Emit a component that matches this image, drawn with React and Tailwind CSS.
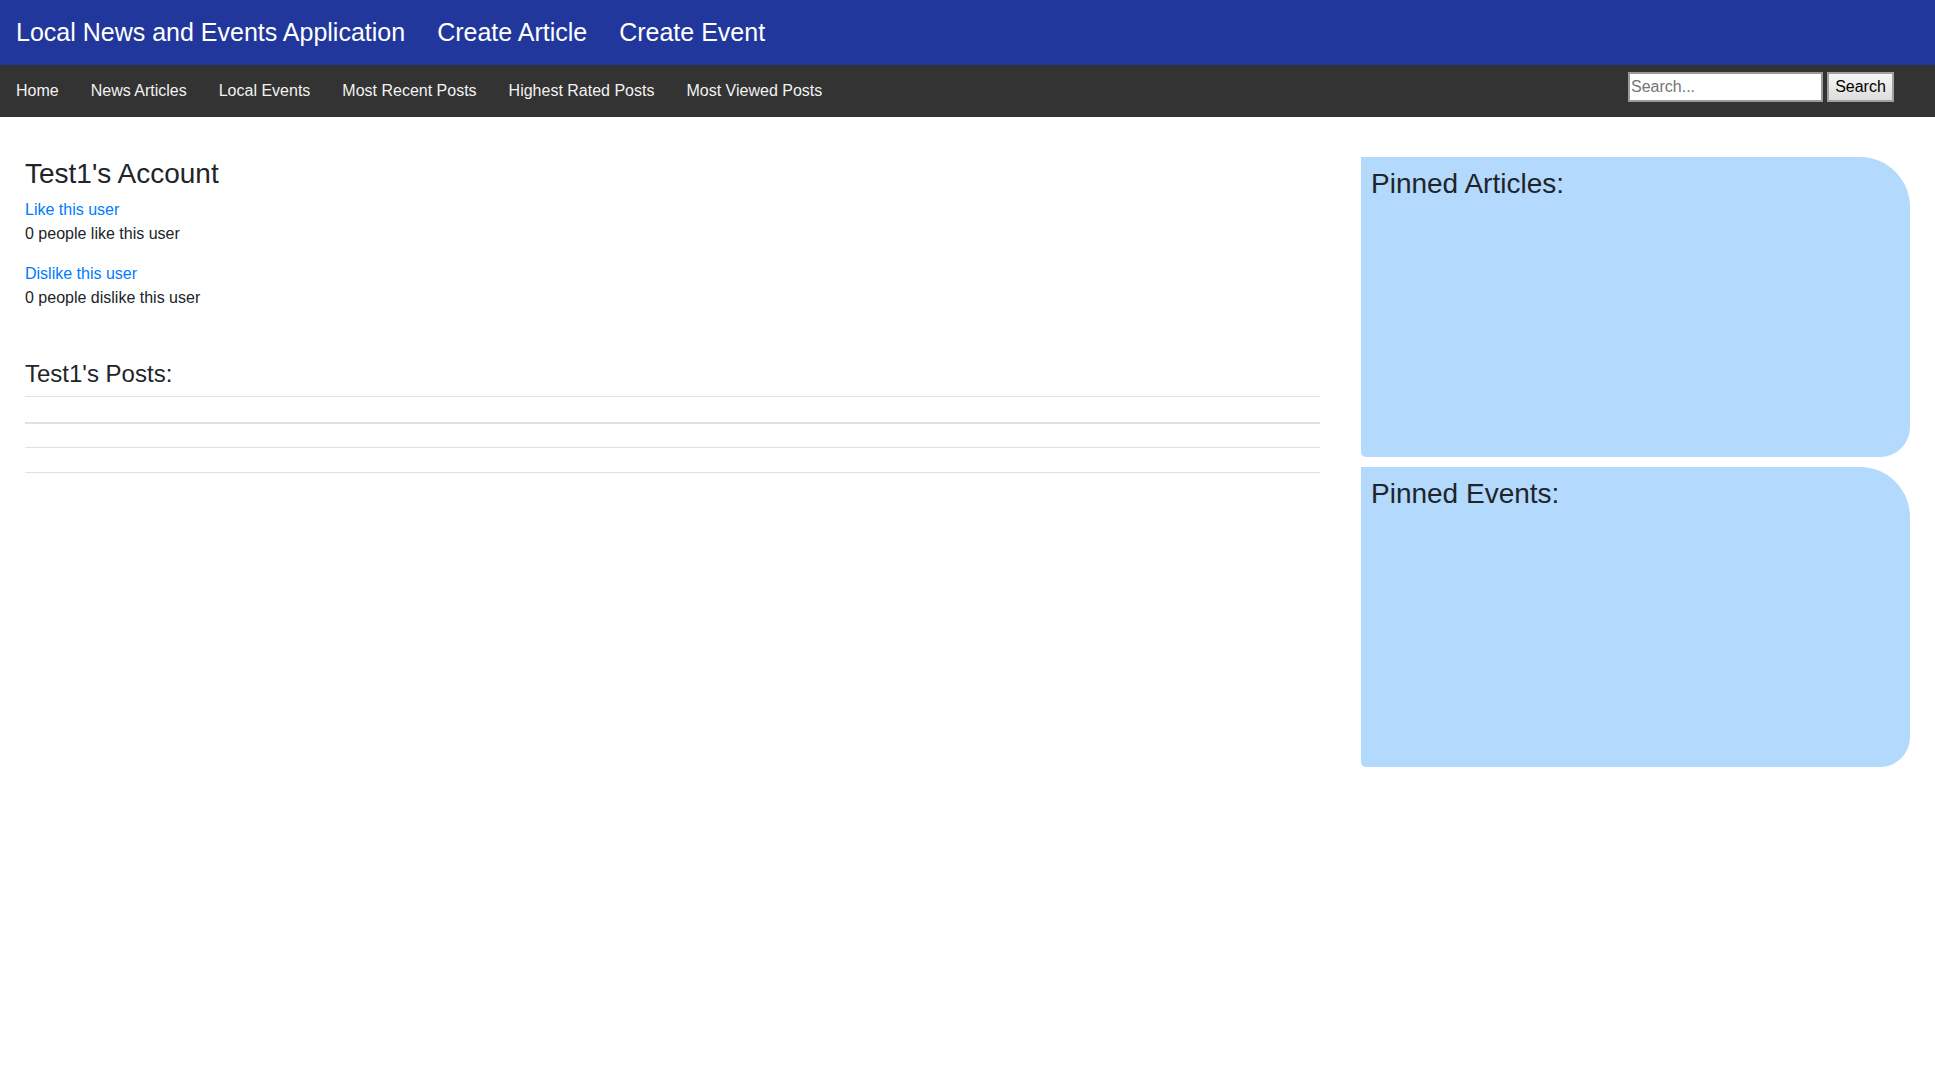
export default function App() {
  const font = { fontFamily: '"Liberation Sans", Arial, sans-serif' };
  return (
    <div className="min-h-screen bg-white text-[#212529]" style={font}>
      <header className="h-[65px] bg-[#21379c] flex items-center pb-[2px]">
        <a className="px-4 text-[25px] text-white leading-[1.2]">Local News and Events Application</a>
        <a className="px-4 text-[25px] text-white leading-[1.2]">Create Article</a>
        <a className="px-4 text-[25px] text-white leading-[1.2]">Create Event</a>
      </header>
      <nav className="h-[52px] bg-[#333333] flex items-center">
        {["Home", "News Articles", "Local Events", "Most Recent Posts", "Highest Rated Posts", "Most Viewed Posts"].map((t) => (
          <a key={t} className="px-4 text-[16px] text-[#f2f2f2] leading-[24px]">{t}</a>
        ))}
        <div className="ml-auto mr-[41px] self-start mt-[7px] flex items-center gap-[4px]">
          <input
            type="text"
            placeholder="Search..."
            className="w-[195px] h-[30px] bg-white border-2 border-[#9a9a9a] px-[1px] text-[16px] text-black placeholder:text-[#757575] outline-none"
            style={font}
          />
          <button
            className="w-[67px] h-[30px] border-2 border-[#a0a0a0] bg-gradient-to-b from-[#f6f6f6] to-[#dddddd] text-[16px] text-black"
            style={font}
          >
            Search
          </button>
        </div>
      </nav>
      <main className="flex px-[25px] pt-[40px] gap-[41px]">
        <section className="flex-1 flex flex-col">
          <h3 className="text-[28px] leading-[1.2] mb-[7px]">Test1's Account</h3>
          <div className="text-[16px] leading-[24px]">
            <a className="text-[#007bff] block">Like this user</a>
            <p>0 people like this user</p>
          </div>
          <div className="text-[16px] leading-[24px] mt-[16px]">
            <a className="text-[#007bff] block">Dislike this user</a>
            <p>0 people dislike this user</p>
          </div>
          <h4 className="text-[24px] leading-[1.2] mt-[50px]">Test1's Posts:</h4>
          <div className="mt-[8px] h-px bg-[#dee2e6]" />
          <div className="mt-[25px] h-[2px] bg-[#dee2e6]" />
          <div className="mt-[23px] h-px bg-[#dee2e6]" />
          <div className="mt-[24px] h-px bg-[#dee2e6]" />
        </section>
        <aside className="w-[549px] flex flex-col gap-[10px]">
          <div className="h-[300px] bg-[#b3d9fd] rounded-[0_50px_30px_5px] p-[10px]">
            <h3 className="text-[28px] leading-[1.2]">Pinned Articles:</h3>
          </div>
          <div className="h-[300px] bg-[#b3d9fd] rounded-[0_50px_30px_5px] p-[10px]">
            <h3 className="text-[28px] leading-[1.2]">Pinned Events:</h3>
          </div>
        </aside>
      </main>
    </div>
  );
}
